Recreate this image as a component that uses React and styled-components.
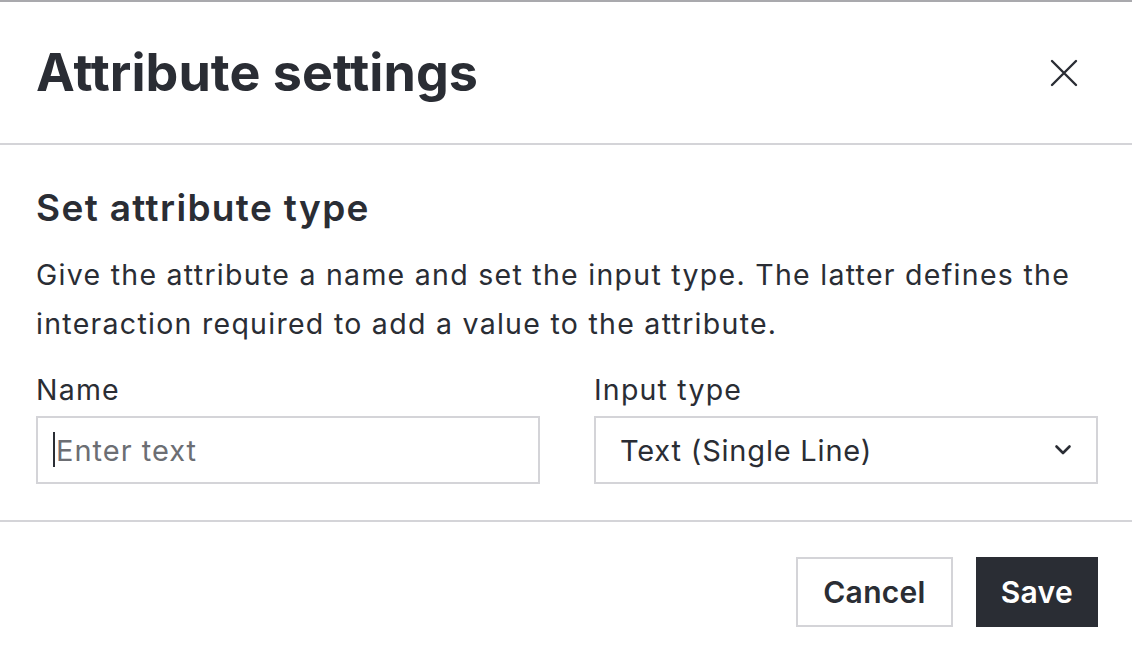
import styled, { createGlobalStyle } from "styled-components";

const GlobalStyle = createGlobalStyle`
  html, body {
    margin: 0;
    padding: 0;
    background: #ffffff;
  }
  body {
    font-family: Inter, "Noto Sans", "Liberation Sans", sans-serif;
    color: #2a2d34;
  }
`;

const Modal = styled.div`
  width: 1132px;
  height: 662px;
  box-sizing: border-box;
  border-top: 2px solid #a9a9ad;
  display: flex;
  flex-direction: column;
`;

const Header = styled.div`
  height: 143px;
  box-sizing: border-box;
  display: flex;
  align-items: center;
  justify-content: space-between;
  padding: 0 48px 0 36px;
  border-bottom: 2px solid #d4d4d8;
`;

const Title = styled.h1`
  margin: 0;
  font-size: 52px;
  font-weight: 700;
  letter-spacing: 0.05px;
`;

const CloseButton = styled.button`
  width: 40px;
  height: 40px;
  border: none;
  background: none;
  padding: 0;
  display: flex;
  align-items: center;
  justify-content: center;
  cursor: pointer;
  color: #2a2d34;
`;

const Body = styled.div`
  padding: 41px 34px 36px 36px;
  border-bottom: 2px solid #d4d4d8;
`;

const SectionTitle = styled.h2`
  margin: 0 0 20px;
  font-size: 37px;
  font-weight: 600;
  line-height: 44px;
  letter-spacing: 1.35px;
`;

const Description = styled.p`
  margin: 0 0 24px;
  font-size: 28.5px;
  line-height: 49px;
  font-weight: 400;
  letter-spacing: 1.28px;
`;

const Fields = styled.div`
  display: grid;
  grid-template-columns: 1fr 1fr;
  column-gap: 54px;
`;

const Field = styled.label`
  display: flex;
  flex-direction: column;
  gap: 8px;
`;

const Label = styled.span`
  font-size: 28.5px;
  line-height: 36px;
  letter-spacing: 1.2px;
`;

const InputWrap = styled.div`
  position: relative;
`;

const TextInput = styled.input`
  width: 100%;
  height: 68px;
  box-sizing: border-box;
  border: 2px solid #d4d4d8;
  padding: 0 18px;
  font-family: inherit;
  font-size: 29px;
  letter-spacing: 1px;
  color: #2a2d34;
  outline: none;
  caret-color: transparent;

  &::placeholder {
    color: #6c6e73;
  }
`;

const Caret = styled.span`
  position: absolute;
  left: 17px;
  top: 16px;
  width: 2px;
  height: 35px;
  background: #2a2d34;
  pointer-events: none;
`;

const SelectBox = styled.div`
  height: 68px;
  box-sizing: border-box;
  border: 2px solid #d4d4d8;
  padding: 0 24px 0 24px;
  display: flex;
  align-items: center;
  justify-content: space-between;
  font-size: 29px;
  letter-spacing: 0.8px;
`;

const Footer = styled.div`
  flex: 1;
  display: flex;
  justify-content: flex-end;
  align-items: flex-start;
  gap: 23px;
  padding: 35px 34px 0 0;
`;

const Button = styled.button`
  height: 70px;
  box-sizing: border-box;
  padding: 0 ${(p) => (p.$primary ? "23px" : "25px")};
  border: 2px solid ${(p) => (p.$primary ? "#2a2d34" : "#d4d4d8")};
  background: ${(p) => (p.$primary ? "#2a2d34" : "#ffffff")};
  color: ${(p) => (p.$primary ? "#ffffff" : "#2a2d34")};
  font-family: inherit;
  font-size: 30px;
  font-weight: 600;
  letter-spacing: 0.3px;
  cursor: pointer;
`;

export default function App() {
  return (
    <>
      <GlobalStyle />
      <Modal>
        <Header>
          <Title>Attribute settings</Title>
          <CloseButton aria-label="Close">
            <svg width="28" height="28" viewBox="0 0 28 28" fill="none">
              <path
                d="M2 2L26 26M26 2L2 26"
                stroke="currentColor"
                strokeWidth="2.4"
                strokeLinecap="round"
              />
            </svg>
          </CloseButton>
        </Header>
        <Body>
          <SectionTitle>Set attribute type</SectionTitle>
          <Description>
            Give the attribute a name and set the input type. The latter defines the
            interaction required to add a value to the attribute.
          </Description>
          <Fields>
            <Field>
              <Label>Name</Label>
              <InputWrap>
                <TextInput placeholder="Enter text" />
                <Caret />
              </InputWrap>
            </Field>
            <Field>
              <Label>Input type</Label>
              <SelectBox>
                <span>Text (Single Line)</span>
                <svg width="18" height="12" viewBox="0 0 18 12" fill="none">
                  <path
                    d="M2.5 2.5L9 9L15.5 2.5"
                    stroke="currentColor"
                    strokeWidth="2.6"
                    strokeLinecap="round"
                    strokeLinejoin="round"
                  />
                </svg>
              </SelectBox>
            </Field>
          </Fields>
        </Body>
        <Footer>
          <Button>Cancel</Button>
          <Button $primary>Save</Button>
        </Footer>
      </Modal>
    </>
  );
}
